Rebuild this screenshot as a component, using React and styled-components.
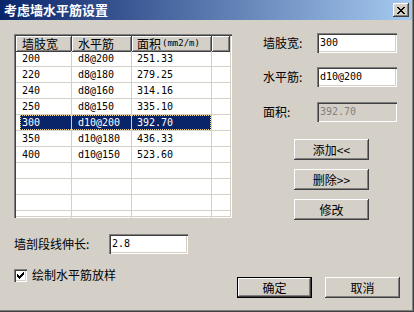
import React from 'react';
import styled, { createGlobalStyle } from 'styled-components';

const ui = `"Noto Sans CJK SC", "Liberation Sans", sans-serif`;
const mono = `"DejaVu Sans Mono", "Noto Sans CJK SC", monospace`;

const Global = createGlobalStyle`
  body {
    margin: 0;
    background: #d4d0c8;
  }
`;

const Window = styled.div`
  width: 414px;
  height: 312px;
  box-sizing: border-box;
  background: #d4d0c8;
  box-shadow: inset -1px -1px #404040, inset -2px -2px #808080;
  display: flex;
  flex-direction: column;
  overflow: hidden;
  font-family: ${ui};
  font-size: 12px;
  color: #000;
`;

const TitleBar = styled.div`
  height: 20px;
  margin-right: 2px;
  display: flex;
  align-items: center;
  justify-content: space-between;
  padding: 0 3px 0 4px;
  background: linear-gradient(to right, #0a246a, #a6caf0);
`;

const Title = styled.span`
  color: #fff;
  font-weight: bold;
  font-size: 13px;
  line-height: 14px;
`;

const CloseBtn = styled.div`
  width: 16px;
  height: 14px;
  box-sizing: border-box;
  background: #d4d0c8;
  box-shadow: inset -1px -1px #404040, inset 1px 1px #fff, inset -2px -2px #808080;
  display: flex;
  align-items: center;
  justify-content: center;
`;

const Body = styled.div`
  flex: 1;
  display: flex;
  flex-direction: column;
  padding: 14px 14px 0 14px;
`;

const Top = styled.div`
  display: flex;
  align-items: flex-start;
`;

const ListView = styled.div`
  width: 218px;
  height: 184px;
  box-sizing: border-box;
  padding: 2px;
  background: #fff;
  box-shadow: inset 1px 1px #808080, inset 2px 2px #404040, inset -1px -1px #fff, inset -2px -2px #d4d0c8;
  overflow: hidden;
`;

const cols = '56px 60px 80px 1fr';

const Header = styled.div`
  display: grid;
  grid-template-columns: ${cols};
  height: 15px;
`;

const HeadCell = styled.div`
  display: flex;
  align-items: center;
  background: #d4d0c8;
  box-shadow: inset -1px -1px #404040, inset 1px 1px #fff, inset -2px -2px #808080;
  padding: 0 0 1px ${p => p.$pad || 0}px;
  line-height: 15px;
  white-space: nowrap;
`;

const Small = styled.span`
  font-family: ${mono};
  font-size: 9px;
  margin-left: 1px;
`;

const Row = styled.div`
  position: relative;
  display: grid;
  grid-template-columns: ${cols};
  height: 16px;
  box-sizing: border-box;
  border-bottom: 1px solid #d4d0c8;

  ${p => p.$sel && `
    &::after {
      content: '';
      position: absolute;
      left: 4px;
      top: 0;
      width: 191px;
      height: 15px;
      box-sizing: border-box;
      border: 1px dotted #f0d890;
    }
  `}
`;

const Cell = styled.div`
  border-right: ${p => (p.$last ? 'none' : '1px solid #d4d0c8')};
  padding-left: ${p => p.$pad || 0}px;
  font-family: ${mono};
  font-size: 10px;
  line-height: 15px;
  white-space: nowrap;
  color: ${p => (p.$sel ? '#fff' : '#000')};
  background: ${p =>
    p.$sel ? (p.$first ? 'linear-gradient(to right, #fff 4px, #0a246a 4px)' : '#0a246a') : 'transparent'};
`;

const Side = styled.div`
  margin: -1px 0 0 31px;
  display: flex;
  flex-direction: column;
`;

const Field = styled.div`
  display: flex;
  align-items: center;
  margin-top: ${p => p.$gap}px;
`;

const Label = styled.span`
  width: ${p => p.$w}px;
  line-height: 14px;
  white-space: nowrap;
`;

const TextBox = styled.div`
  width: ${p => p.$w}px;
  height: 20px;
  box-sizing: border-box;
  padding: 0 3px;
  background: ${p => (p.$disabled ? '#d4d0c8' : '#fff')};
  color: ${p => (p.$disabled ? '#808080' : '#000')};
  box-shadow: inset 1px 1px #808080, inset 2px 2px #404040, inset -1px -1px #fff, inset -2px -2px #d4d0c8;
  font-family: ${mono};
  font-size: 10px;
  line-height: 20px;
`;

const SideButtons = styled.div`
  display: flex;
  flex-direction: column;
  gap: 9px;
  margin: 17px 0 0 31px;
`;

const Button = styled.div`
  width: 75px;
  height: 21px;
  box-sizing: border-box;
  display: flex;
  align-items: center;
  justify-content: center;
  background: #d4d0c8;
  line-height: 14px;
  box-shadow: ${p =>
    p.$default
      ? 'inset 0 0 0 1px #000, inset -2px -2px #404040, inset 2px 2px #fff, inset -3px -3px #808080'
      : 'inset -1px -1px #404040, inset 1px 1px #fff, inset -2px -2px #808080'};
`;

const LengthRow = styled.div`
  display: flex;
  align-items: center;
  margin-top: 14px;
`;

const Bottom = styled.div`
  display: flex;
  align-items: flex-start;
  margin-top: 14px;
`;

const CheckWrap = styled.label`
  display: flex;
  align-items: center;
  gap: 5px;
  line-height: 14px;
`;

const CheckBox = styled.div`
  width: 13px;
  height: 13px;
  box-sizing: border-box;
  background: #fff;
  box-shadow: inset 1px 1px #808080, inset 2px 2px #404040, inset -1px -1px #fff, inset -2px -2px #d4d0c8;
  display: flex;
  align-items: center;
  justify-content: center;
`;

const Actions = styled.div`
  margin: 9px 0 0 auto;
  display: flex;
  gap: 13px;
`;

const rows = [
  ['200', 'd8@200', '251.33'],
  ['220', 'd8@180', '279.25'],
  ['240', 'd8@160', '314.16'],
  ['250', 'd8@150', '335.10'],
  ['300', 'd10@200', '392.70'],
  ['350', 'd10@180', '436.33'],
  ['400', 'd10@150', '523.60'],
  ['', '', ''],
  ['', '', ''],
  ['', '', ''],
  ['', '', ''],
];

const pads = [6, 6, 5];

export default function App() {
  return (
    <>
      <Global />
      <Window>
        <TitleBar>
          <Title>考虑墙水平筋设置</Title>
          <CloseBtn>
            <svg width="8" height="7" viewBox="0 0 8 7" shapeRendering="crispEdges">
              <path d="M0 0h2v1H0zM6 0h2v1H6zM1 1h2v1H1zM5 1h2v1H5zM2 2h4v1H2zM3 3h2v1H3zM2 4h4v1H2zM1 5h2v1H1zM5 5h2v1H5zM0 6h2v1H0zM6 6h2v1H6z" fill="#000" />
            </svg>
          </CloseBtn>
        </TitleBar>
        <Body>
          <Top>
            <ListView>
              <Header>
                <HeadCell $pad={6}>墙肢宽</HeadCell>
                <HeadCell $pad={6}>水平筋</HeadCell>
                <HeadCell $pad={5}>面积<Small>(mm2/m)</Small></HeadCell>
                <HeadCell />
              </Header>
              {rows.map((r, i) => {
                const sel = i === 4;
                return (
                  <Row key={i} $sel={sel}>
                    {r.map((v, j) => (
                      <Cell key={j} $pad={pads[j]} $sel={sel} $first={j === 0}>
                        {v}
                      </Cell>
                    ))}
                    <Cell $last />
                  </Row>
                );
              })}
            </ListView>
            <Side>
              <Field $gap={0}>
                <Label $w={54}>墙肢宽:</Label>
                <TextBox $w={80}>300</TextBox>
              </Field>
              <Field $gap={14}>
                <Label $w={54}>水平筋:</Label>
                <TextBox $w={80}>d10@200</TextBox>
              </Field>
              <Field $gap={15}>
                <Label $w={54}>面积:</Label>
                <TextBox $w={80} $disabled>392.70</TextBox>
              </Field>
              <SideButtons>
                <Button>添加&lt;&lt;</Button>
                <Button>删除&gt;&gt;</Button>
                <Button>修改</Button>
              </SideButtons>
            </Side>
          </Top>
          <LengthRow>
            <Label $w={95}>墙剖段线伸长:</Label>
            <TextBox $w={79}>2.8</TextBox>
          </LengthRow>
          <Bottom>
            <CheckWrap>
              <CheckBox>
                <svg width="7" height="7" viewBox="0 0 7 7" shapeRendering="crispEdges">
                  <path d="M6 0h1v1H6zM5 1h2v1H5zM0 2h1v1H0zM4 2h3v1H4zM0 3h2v1H0zM3 3h3v1H3zM0 4h5v1H0zM1 5h3v1H1zM2 6h1v1H2z" fill="#000" />
                </svg>
              </CheckBox>
              绘制水平筋放样
            </CheckWrap>
            <Actions>
              <Button $default>确定</Button>
              <Button>取消</Button>
            </Actions>
          </Bottom>
        </Body>
      </Window>
    </>
  );
}
